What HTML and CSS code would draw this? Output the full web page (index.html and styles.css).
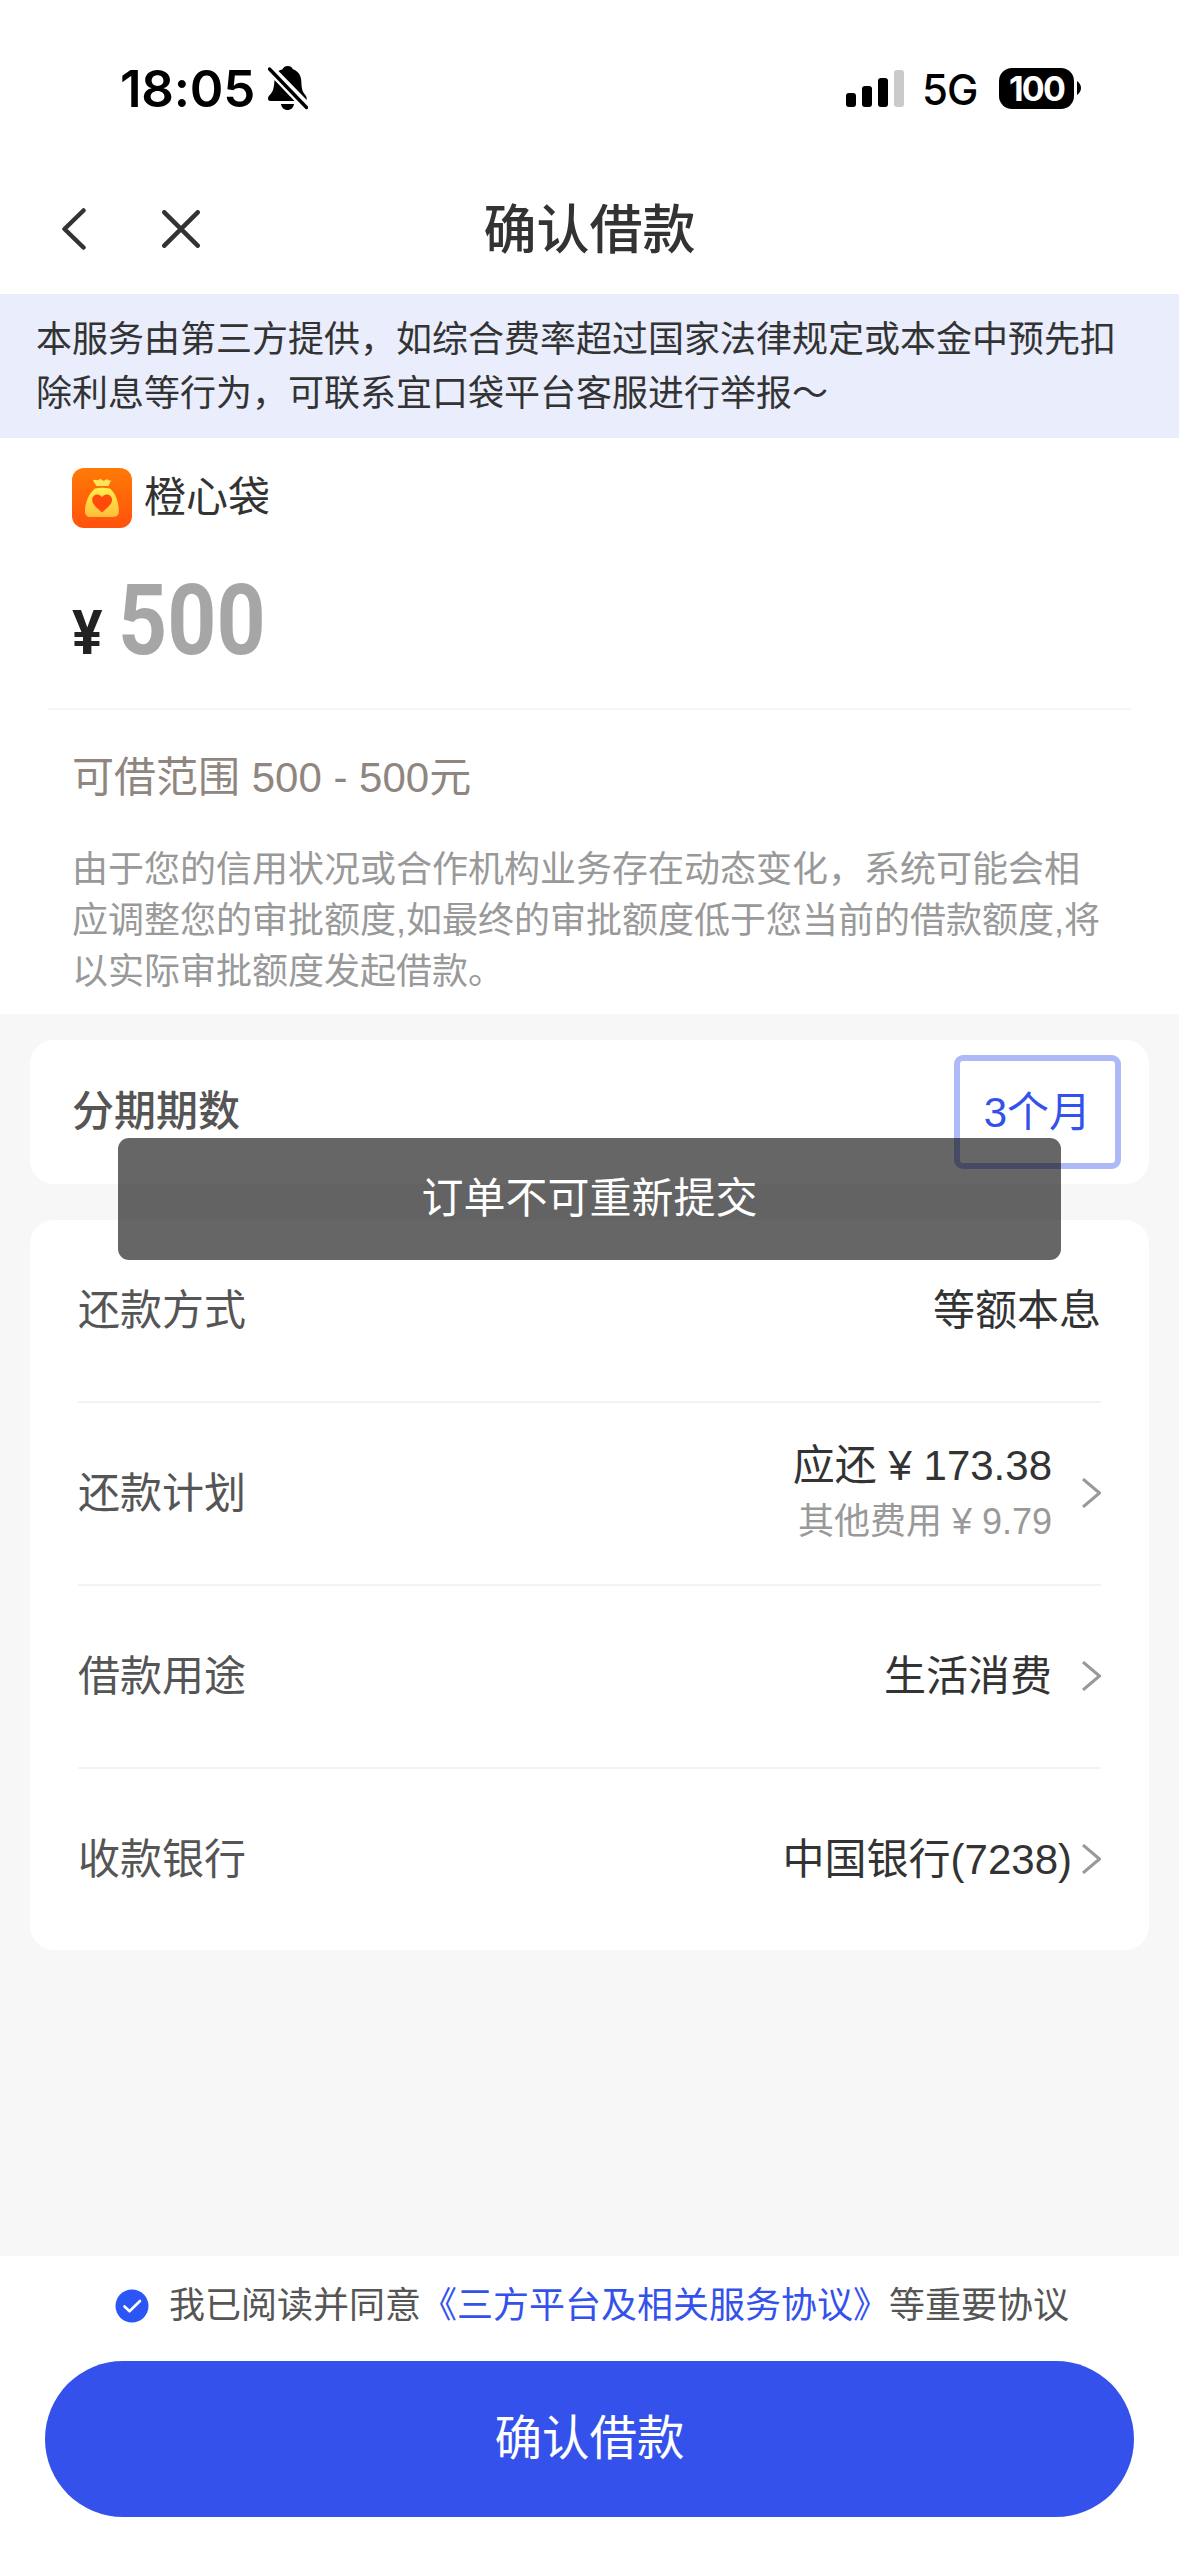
FILE: index.html
```html
<!DOCTYPE html>
<html lang="zh-CN">
<head>
<meta charset="utf-8">
<title>确认借款</title>
<link rel="stylesheet" href="styles.css">
</head>
<body>
<div class="screen">
  <div class="status">
    <div class="clock">
      <span class="time">18:05</span>
      <svg class="bell" viewBox="0 0 40 44" width="40" height="44">
        <path d="M10.500 5C12.500 4 14 3.600 14.700 3C15.500 1 17.300 0 19.700 0S24 1 24.900 3.200C30.500 5.200 33 9.500 33.300 15C33.600 21.500 34 25 36.500 28C38 29.800 38.800 31 38.800 34Z"/>
        <path d="M6.500 14L26.500 35H2.500C.5 35 0 34 0 32.300C0 30 3.500 28 4.800 24.500C5.900 21.500 6.200 18 6.500 14Z"/>
        <path d="M13 38H26C25.500 41.800 23 44 19.500 44S13.500 41.800 13 38Z"/>
        <path d="M1.500 3L38.500 41.500" stroke="#000" stroke-width="3.400" stroke-linecap="round"/>
      </svg>
    </div>
    <div class="radio">
      <svg class="signal" viewBox="0 0 58 38" width="58" height="38">
        <rect x="0" y="24" width="10" height="14" rx="3"/>
        <rect x="16" y="17" width="10" height="21" rx="3"/>
        <rect x="32" y="9" width="10" height="29" rx="3"/>
        <rect x="48" y="1" width="10" height="37" rx="3" fill="#cacaca"/>
      </svg>
      <span class="net">5G</span>
      <span class="battery">100</span>
      <svg class="nub" viewBox="0 0 4 14" width="4" height="14"><path d="M0 0Q4 3 4 7T0 14Z"/></svg>
    </div>
  </div>

  <div class="navbar">
    <svg class="back" viewBox="0 0 24 42" width="24" height="42"><path d="M21.500 2.500L2.500 21L21.500 39.500"/></svg>
    <svg class="close" viewBox="0 0 38 38" width="38" height="38"><path d="M2.300 2.300L35.700 35.700M35.700 2.300L2.300 35.700"/></svg>
    <h1 class="title">确认借款</h1>
  </div>

  <div class="notice">本服务由第三方提供，如综合费率超过国家法律规定或本金中预先扣<br>除利息等行为，可联系宜口袋平台客服进行举报～</div>

  <section class="loan">
    <div class="brand">
      <svg class="logo" viewBox="0 0 60 60" width="60" height="60">
        <defs>
          <linearGradient id="tile" x1="0" y1="0" x2="0" y2="1"><stop offset="0" stop-color="#ff7a05"/><stop offset="1" stop-color="#ff520d"/></linearGradient>
          <linearGradient id="bag" x1="0" y1="0" x2="0" y2="1"><stop offset="0" stop-color="#fff04a"/><stop offset="1" stop-color="#ffbd3c"/></linearGradient>
        </defs>
        <rect width="60" height="60" rx="12" fill="url(#tile)"/>
        <path fill="#ffe35a" d="M24.500 18L21 12.500Q22 11.300 24 12Q25.500 12.500 27 11.500Q28.500 10.500 30.200 12Q32 13.500 33.500 11.700Q35 10.500 36.500 12Q38 12.800 39.200 12L36.500 18Z"/>
        <path fill="url(#bag)" d="M23 20.500Q30 18.800 38 20.500C44 26 46.500 34 46.800 42C47 47 45.500 49 41 49H19C14.500 49 12.700 47 13 42C13.500 34 16.500 26 23 20.500Z"/>
        <path fill="#ff4a0a" d="M30 44.500C26 40.500 20.200 37 20.200 31.800C20.200 26.500 27 24.500 30 29.300C33 24.500 40 26.500 40 31.800C40 37 34 40.500 30 44.500Z"/>
      </svg>
      <span>橙心袋</span>
    </div>
    <div class="amount"><span class="yen">¥</span><span class="figure">500</span></div>
    <div class="range">可借范围 500 - 500元</div>
    <p class="hint">由于您的信用状况或合作机构业务存在动态变化，系统可能会相<br>应调整您的审批额度,如最终的审批额度低于您当前的借款额度,将<br>以实际审批额度发起借款。</p>
  </section>

  <main class="body">
    <section class="card term">
      <span class="term-label">分期期数</span>
      <span class="term-option">3个月</span>
    </section>

    <section class="card details">
      <div class="row"><span class="label">还款方式</span><span class="value">等额本息</span></div>
      <div class="row">
        <span class="label">还款计划</span>
        <span class="value stack"><span>应还 ¥ 173.38</span><span class="sub">其他费用 ¥ 9.79</span></span>
        <svg class="chevron" viewBox="0 0 19 30" width="19" height="30"><path d="M1 1L17.500 15L1 29"/></svg>
      </div>
      <div class="row">
        <span class="label">借款用途</span>
        <span class="value">生活消费</span>
        <svg class="chevron" viewBox="0 0 19 30" width="19" height="30"><path d="M1 1L17.500 15L1 29"/></svg>
      </div>
      <div class="row bank">
        <span class="label">收款银行</span>
        <span class="value">中国银行(7238)</span>
        <svg class="chevron" viewBox="0 0 19 30" width="19" height="30"><path d="M1 1L17.500 15L1 29"/></svg>
      </div>
    </section>
  </main>

  <footer class="footer">
    <div class="agree">
      <svg class="check" viewBox="0 0 34 34" width="34" height="34"><circle cx="17" cy="17" r="16.500" fill="#2b56f5"/><path d="M9.500 17.500L14.500 22.300L25 12" fill="none" stroke="#fff" stroke-width="2.600" stroke-linecap="round" stroke-linejoin="round"/></svg>
      <span>我已阅读并同意<a class="link">《三方平台及相关服务协议》</a>等重要协议</span>
    </div>
    <button class="submit">确认借款</button>
  </footer>

  <div class="toast">订单不可重新提交</div>
</div>
</body>
</html>
```
FILE: styles.css
```css
* { box-sizing: border-box; }

body {
  margin: 0;
  background: #fff;
  color: #333;
  font-family: "Liberation Sans", "Noto Sans CJK SC", sans-serif;
  font-size: 42px;
  line-height: 60px;
  text-spacing-trim: space-all;
}

svg { display: block; flex: none; }

.screen {
  position: relative;
  width: 1179px;
  height: 2556px;
  display: flex;
  flex-direction: column;
  overflow: hidden;
}

/* Status bar */
.status {
  height: 176px;
  padding: 0 98px 0 120px;
  display: flex;
  justify-content: space-between;
  align-items: center;
  color: #000;
  font-family: Inter, sans-serif;
}
.clock, .radio { display: flex; align-items: center; }
.clock { gap: 13px; }
.time { font-size: 51px; font-weight: 600; line-height: 60px; padding-top: 1px; letter-spacing: -0.2px; }
.signal { margin-right: 18px; }
.net { width: 77px; font-size: 42px; font-weight: 500; line-height: 50px; padding-top: 3px; letter-spacing: -1px; }
.battery {
  width: 75px;
  height: 41px;
  border-radius: 13px;
  background: #000;
  color: #fff;
  font-size: 34px;
  font-weight: 700;
  line-height: 41px;
  text-align: center;
  letter-spacing: -1.800px;
}
.nub { margin-left: 3px; }

/* Navigation bar */
.navbar {
  position: relative;
  height: 118px;
  padding: 0 62px 12px;
  display: flex;
  align-items: center;
  gap: 76px;
}
.navbar svg { fill: none; stroke: #333; stroke-width: 4.500; stroke-linecap: round; stroke-linejoin: round; }
.title {
  position: absolute;
  left: 0;
  right: 0;
  margin: 0;
  padding-top: 3px;
  text-align: center;
  font-size: 53px;
  font-weight: 500;
  line-height: 70px;
}

.notice {
  height: 144px;
  padding: 19px 36px 17px;
  background: #e9edfc;
  font-size: 36px;
  line-height: 54px;
  white-space: nowrap;
}

/* Loan amount */
.loan { height: 576px; }
.brand {
  height: 120px;
  padding-left: 72px;
  display: flex;
  align-items: center;
  gap: 12px;
}
.amount {
  height: 152px;
  margin: 0 48px;
  padding: 3px 0 0 24px;
  display: flex;
  align-items: baseline;
  border-bottom: 2px solid #f5f5f5;
  font-family: Roboto, sans-serif;
  font-weight: 700;
  line-height: 120px;
}
.yen { width: 46px; font-size: 62px; color: #222; transform: scaleX(0.92); transform-origin: 0 50%; }
.figure { font-size: 98px; color: #a6a6a6; transform: scaleX(0.875); transform-origin: 0 50%; }
.range { margin: 38px 72px 0; color: #8f8680; white-space: pre; }
.hint {
  margin: 36px 72px 0;
  color: #999;
  font-size: 36px;
  line-height: 51px;
  white-space: nowrap;
}

/* Cards */
.body {
  height: 1242px;
  padding: 26px 30px 0;
  display: flex;
  flex-direction: column;
  gap: 36px;
  background: #f7f7f7;
}
.card { background: #fff; border-radius: 24px; }
.term {
  height: 144px;
  padding: 0 28px 0 42px;
  display: flex;
  justify-content: space-between;
  align-items: center;
}
.term-label { color: #555; font-weight: 500; }
.term-option {
  height: 114px;
  padding: 0 24px;
  border: 6px solid #aeb9f7;
  border-radius: 9px;
  color: #3452eb;
  line-height: 104px;
}
.details { height: 730px; padding: 0 48px; }
.row {
  height: 183px;
  display: flex;
  align-items: center;
  border-bottom: 2px solid #f3f3f3;
}
.row:last-child { border-bottom: 0; height: 181px; }
.label { flex: 1; color: #555; }
.stack { display: flex; flex-direction: column; align-items: flex-end; line-height: 57px; }
.sub { color: #999; font-size: 36px; line-height: 56px; }
.chevron { margin: 0 0 2px 30px; fill: none; stroke: #999; stroke-width: 3; }
.bank .chevron { margin-left: 10px; }

/* Footer */
.footer { flex: 1; padding: 18px 45px 0; }
.agree {
  height: 63px;
  padding-left: 70px;
  display: flex;
  align-items: center;
  gap: 20px;
  color: #555;
  font-size: 36px;
  white-space: nowrap;
}
.link { color: #3452eb; }
.submit {
  display: block;
  width: 1089px;
  height: 156px;
  margin: 24px 0 0;
  padding: 0;
  border: 0;
  border-radius: 78px;
  background: #3452eb;
  color: #fff;
  font: inherit;
  font-size: 47.500px;
  line-height: 156px;
}

.toast {
  position: absolute;
  left: 118px;
  top: 1138px;
  width: 943px;
  height: 122px;
  border-radius: 11px;
  background: rgba(0, 0, 0, 0.6);
  color: #fff;
  line-height: 122px;
  text-align: center;
}
```
